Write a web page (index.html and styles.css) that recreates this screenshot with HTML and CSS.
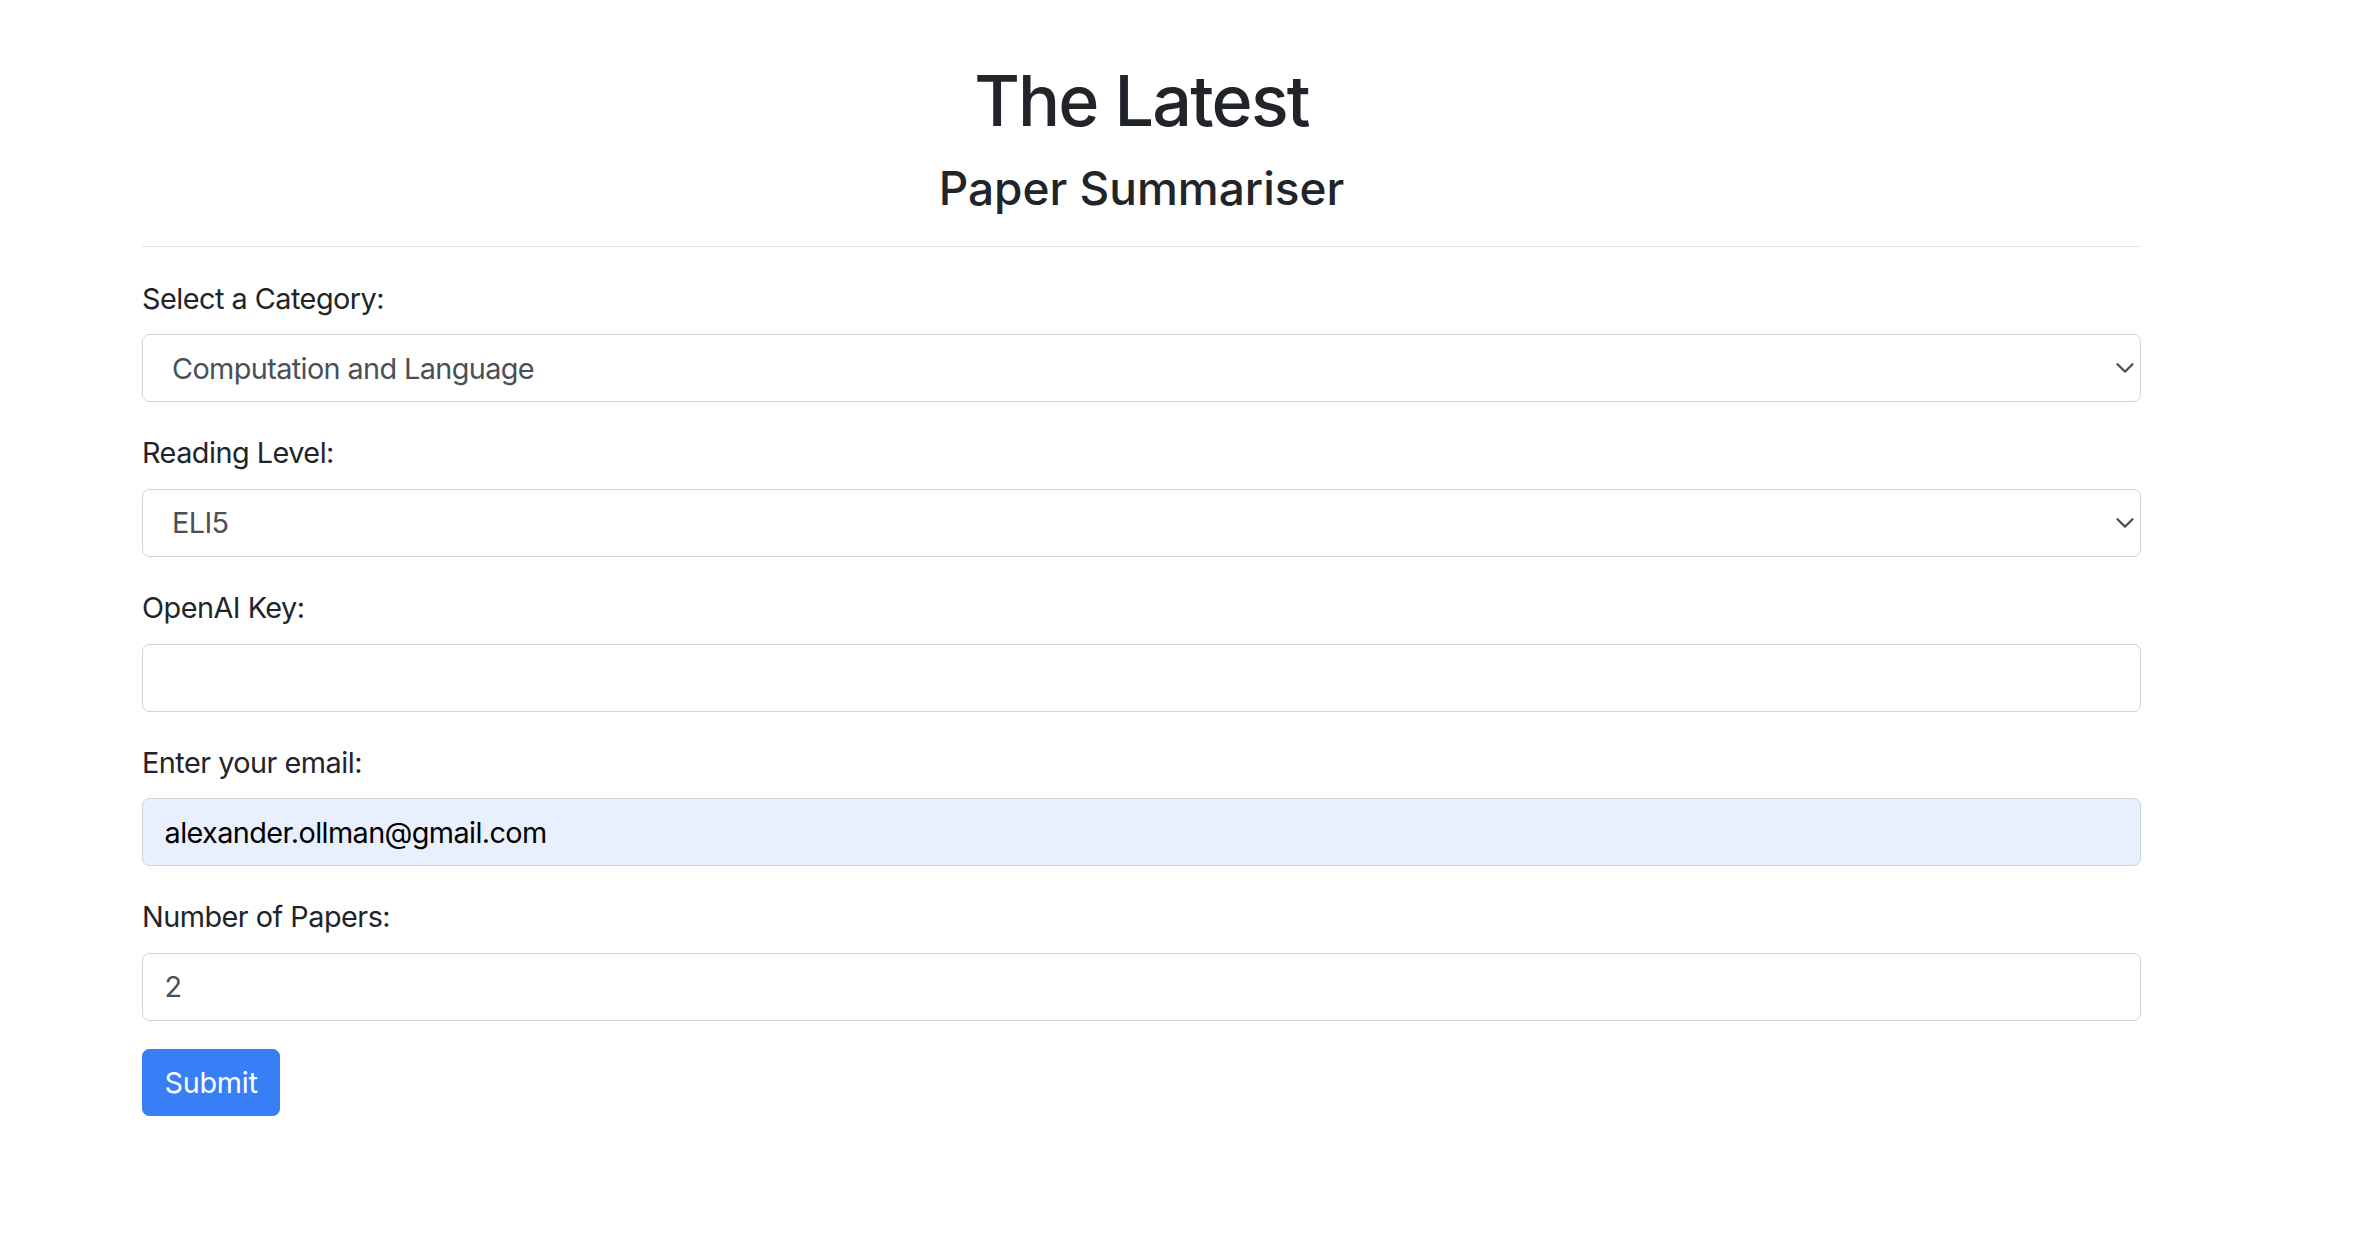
FILE: index.html
```html
<!DOCTYPE html>
<html lang="en">
<head>
<meta charset="utf-8">
<title>The Latest - Paper Summariser</title>
<link rel="stylesheet" href="styles.css">
</head>
<body>
<div class="container">
  <h1 class="title">The Latest</h1>
  <h2 class="subtitle">Paper Summariser</h2>
  <hr class="divider">
  <form class="form">
    <div class="form-group">
      <label class="form-label" for="category">Select a Category:</label>
      <div class="select-wrap">
        <select id="category" class="form-control form-select">
          <option>Computation and Language</option>
        </select>
        <svg class="chevron" width="18" height="10" viewBox="0 0 18 10"><path d="M1.5 1.2 L9 8.6 L16.5 1.2" fill="none" stroke="#4a4f55" stroke-width="2.2" stroke-linecap="round" stroke-linejoin="round"/></svg>
      </div>
    </div>
    <div class="form-group">
      <label class="form-label" for="level">Reading Level:</label>
      <div class="select-wrap">
        <select id="level" class="form-control form-select">
          <option>ELI5</option>
        </select>
        <svg class="chevron" width="18" height="10" viewBox="0 0 18 10"><path d="M1.5 1.2 L9 8.6 L16.5 1.2" fill="none" stroke="#4a4f55" stroke-width="2.2" stroke-linecap="round" stroke-linejoin="round"/></svg>
      </div>
    </div>
    <div class="form-group">
      <label class="form-label" for="key">OpenAI Key:</label>
      <input id="key" class="form-control" type="text" value="">
    </div>
    <div class="form-group">
      <label class="form-label" for="email">Enter your email:</label>
      <input id="email" class="form-control autofilled" type="text" value="alexander.ollman@gmail.com">
    </div>
    <div class="form-group form-group-last">
      <label class="form-label" for="num">Number of Papers:</label>
      <input id="num" class="form-control" type="text" value="2">
    </div>
    <button type="button" class="btn-primary">Submit</button>
  </form>
</div>
</body>
</html>
```
FILE: styles.css
```css
html, body {
  margin: 0;
  padding: 0;
  background: #ffffff;
}

body {
  font-family: "Inter", "Liberation Sans", sans-serif;
  font-size: 28.8px;
  line-height: 43.2px;
  color: #212529;
}

.container {
  width: 1999px;
  margin-left: 142px;
  padding-top: 57.6px;
}

.title {
  margin: 0;
  font-size: 70px;
  line-height: 86.4px;
  font-weight: 500;
  letter-spacing: -1.8px;
  text-align: center;
  color: #212529;
}

.subtitle {
  margin: 16.6px 0 0 0;
  font-size: 46px;
  line-height: 55.2px;
  font-weight: 500;
  text-align: center;
  color: #212529;
}

.divider {
  margin: 30px 0 30px 0;
  border: 0;
  border-top: 1px solid #e3e5e8;
  height: 0;
}

.form {
  margin: 0;
}

.form-group {
  margin-bottom: 29px;
}

.form-group-last {
  margin-bottom: 28px;
}

.form-label {
  display: block;
  margin-bottom: 14.4px;
  font-size: 28.8px;
  line-height: 43.2px;
  letter-spacing: -0.5px;
}

.select-wrap {
  position: relative;
}

.form-control {
  display: block;
  box-sizing: border-box;
  width: 100%;
  height: 68px;
  margin: 0;
  padding: 10.8px 21.6px;
  font-family: "Inter", "Liberation Sans", sans-serif;
  font-size: 28.8px;
  line-height: 43.2px;
  letter-spacing: -0.6px;
  color: #495057;
  background: #ffffff;
  border: 1px solid #ced4da;
  border-radius: 7.2px;
  outline: none;
}

.form-select {
  appearance: none;
  -webkit-appearance: none;
  padding-left: 29px;
}

.chevron {
  position: absolute;
  right: 7px;
  top: 29px;
  pointer-events: none;
}

.autofilled {
  background: #e8f0fe;
  color: #000000;
}

.btn-primary {
  display: inline-block;
  box-sizing: border-box;
  height: 67px;
  padding: 10.8px 21.6px;
  font-family: "Inter", "Liberation Sans", sans-serif;
  font-size: 28.8px;
  line-height: 43.2px;
  letter-spacing: -0.3px;
  color: #ffffff;
  background: #387ef6;
  border: 1px solid #387ef6;
  border-radius: 7.2px;
  cursor: pointer;
}
```
